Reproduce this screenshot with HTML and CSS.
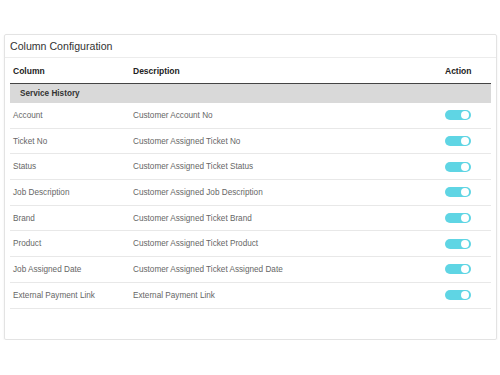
FILE: index.html
```html
<!DOCTYPE html>
<html lang="en">
<head>
    <meta charset="UTF-8">
    <title>Column Configuration</title>
    <link rel="stylesheet" href="styles.css">
</head>
<body>

<div class="card">
    <div class="card-title">Column Configuration</div>
    <div class="card-body">
        <table class="config-table">
            <thead>
                <tr>
                    <th class="col-name">Column</th>
                    <th class="col-desc">Description</th>
                    <th class="col-action">Action</th>
                </tr>
            </thead>
            <tbody>
                <tr class="group-row">
                    <td colspan="3">Service History</td>
                </tr>
                <tr>
                    <td>Account</td>
                    <td>Customer Account No</td>
                    <td class="col-action"><span class="toggle"></span></td>
                </tr>
                <tr>
                    <td>Ticket No</td>
                    <td>Customer Assigned Ticket No</td>
                    <td class="col-action"><span class="toggle"></span></td>
                </tr>
                <tr>
                    <td>Status</td>
                    <td>Customer Assigned Ticket Status</td>
                    <td class="col-action"><span class="toggle"></span></td>
                </tr>
                <tr>
                    <td>Job Description</td>
                    <td>Customer Assigned Job Description</td>
                    <td class="col-action"><span class="toggle"></span></td>
                </tr>
                <tr>
                    <td>Brand</td>
                    <td>Customer Assigned Ticket Brand</td>
                    <td class="col-action"><span class="toggle"></span></td>
                </tr>
                <tr>
                    <td>Product</td>
                    <td>Customer Assigned Ticket Product</td>
                    <td class="col-action"><span class="toggle"></span></td>
                </tr>
                <tr>
                    <td>Job Assigned Date</td>
                    <td>Customer Assigned Ticket Assigned Date</td>
                    <td class="col-action"><span class="toggle"></span></td>
                </tr>
                <tr>
                    <td>External Payment Link</td>
                    <td>External Payment Link</td>
                    <td class="col-action"><span class="toggle"></span></td>
                </tr>
            </tbody>
        </table>
    </div>
</div>

</body>
</html>
```

FILE: styles.css
```css
body {
    font-family: "Liberation Sans", Arial, sans-serif;
    margin: 0;
    padding: 34px 3px 0 4px;
    background-color: #ffffff;
}

.card {
    border: 1px solid #e3e3e3;
    border-radius: 2px;
    box-shadow: 0 1px 2px rgba(0, 0, 0, 0.08);
    height: 306px;
    box-sizing: border-box;
}

.card-title {
    font-size: 10.6px;
    color: #333;
    height: 23px;
    line-height: 22px;
    padding-left: 5px;
    border-bottom: 1px solid #ececec;
    box-sizing: border-box;
}

.card-body {
    padding: 0 5px 0 5px;
}

.config-table {
    width: 100%;
    border-collapse: collapse;
    font-size: 8.2px;
    color: #666;
}

.config-table th {
    font-size: 8.5px;
    font-weight: bold;
    color: #222;
    text-align: left;
    height: 25px;
    padding: 0 3px;
    border-bottom: 1px solid #444;
}

.config-table td {
    height: 24.7px;
    padding: 0 3px;
    border-bottom: 1px solid #e8e8e8;
}

.col-name {
    width: 114px;
}

.config-table .col-action {
    width: 43px;
}

.config-table .group-row td {
    background-color: #d9d9d9;
    font-weight: bold;
    color: #333;
    height: 19px;
    padding-left: 10px;
    border-bottom: none;
}

.toggle {
    display: inline-block;
    position: relative;
    width: 26px;
    height: 10px;
    border-radius: 5px;
    background-color: #5fd5e4;
    vertical-align: middle;
}

.toggle::after {
    content: "";
    position: absolute;
    right: 2px;
    top: 1px;
    width: 8px;
    height: 8px;
    border-radius: 50%;
    background-color: #fff;
}
```
